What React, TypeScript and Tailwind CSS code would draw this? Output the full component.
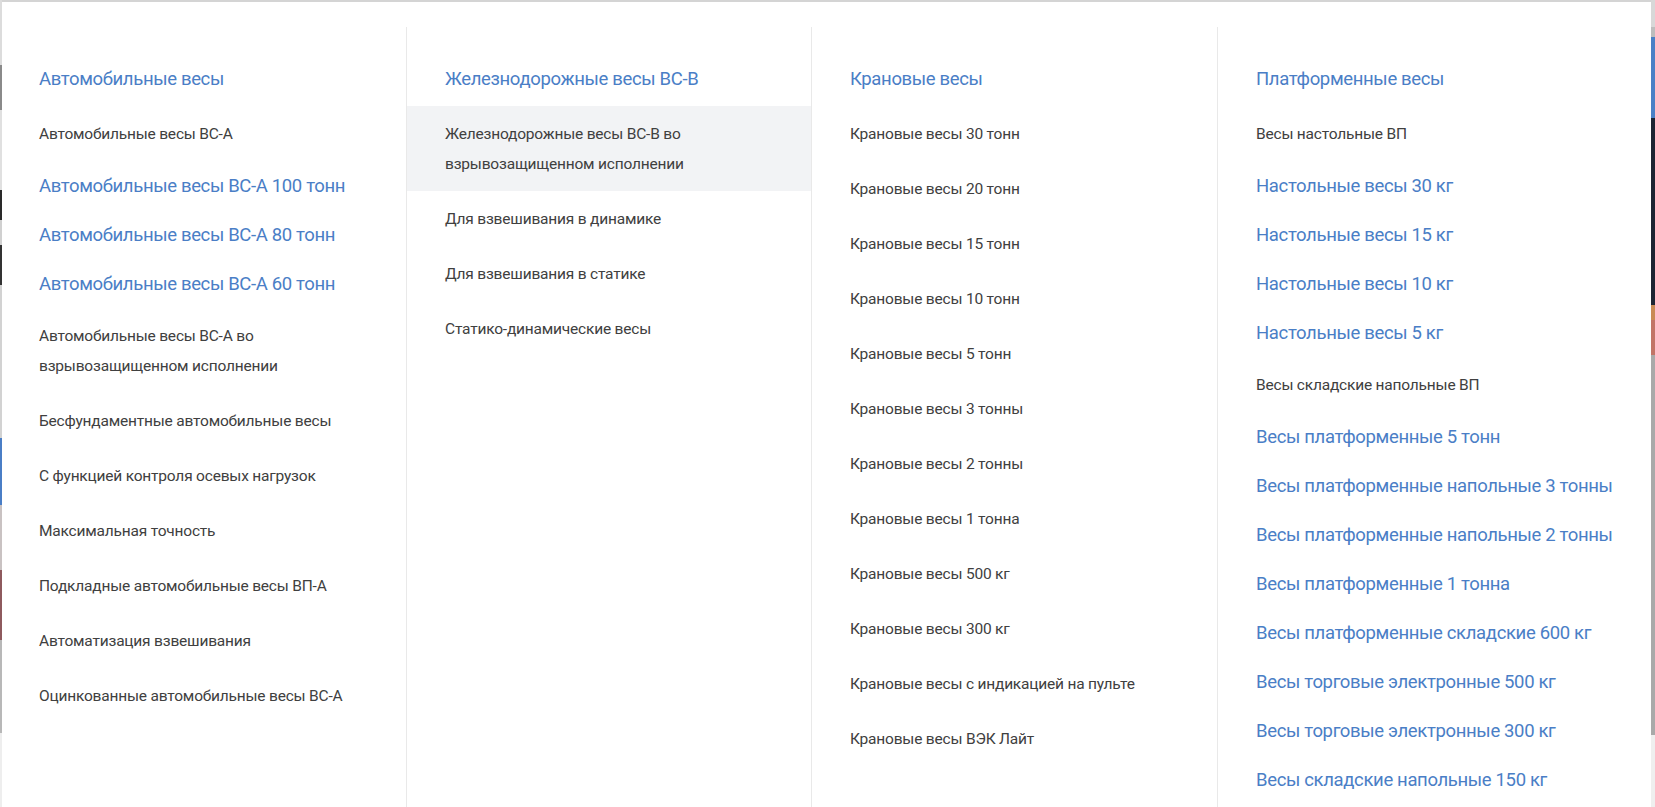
import React from "react";

type Item = { t: string; big?: boolean; active?: boolean };

const cols: { head: string; items: Item[] }[] = [
  {
    head: "Автомобильные весы",
    items: [
      { t: "Автомобильные весы ВС-А" },
      { t: "Автомобильные весы ВС-А 100 тонн", big: true },
      { t: "Автомобильные весы ВС-А 80 тонн", big: true },
      { t: "Автомобильные весы ВС-А 60 тонн", big: true },
      { t: "Автомобильные весы ВС-А во взрывозащищенном исполнении" },
      { t: "Бесфундаментные автомобильные весы" },
      { t: "С функцией контроля осевых нагрузок" },
      { t: "Максимальная точность" },
      { t: "Подкладные автомобильные весы ВП-А" },
      { t: "Автоматизация взвешивания" },
      { t: "Оцинкованные автомобильные весы ВС-А" },
    ],
  },
  {
    head: "Железнодорожные весы ВС-В",
    items: [
      { t: "Железнодорожные весы ВС-В во взрывозащищенном исполнении", active: true },
      { t: "Для взвешивания в динамике" },
      { t: "Для взвешивания в статике" },
      { t: "Статико-динамические весы" },
    ],
  },
  {
    head: "Крановые весы",
    items: [
      { t: "Крановые весы 30 тонн" },
      { t: "Крановые весы 20 тонн" },
      { t: "Крановые весы 15 тонн" },
      { t: "Крановые весы 10 тонн" },
      { t: "Крановые весы 5 тонн" },
      { t: "Крановые весы 3 тонны" },
      { t: "Крановые весы 2 тонны" },
      { t: "Крановые весы 1 тонна" },
      { t: "Крановые весы 500 кг" },
      { t: "Крановые весы 300 кг" },
      { t: "Крановые весы с индикацией на пульте" },
      { t: "Крановые весы ВЭК Лайт" },
    ],
  },
  {
    head: "Платформенные весы",
    items: [
      { t: "Весы настольные ВП" },
      { t: "Настольные весы 30 кг", big: true },
      { t: "Настольные весы 15 кг", big: true },
      { t: "Настольные весы 10 кг", big: true },
      { t: "Настольные весы 5 кг", big: true },
      { t: "Весы складские напольные ВП" },
      { t: "Весы платформенные 5 тонн", big: true },
      { t: "Весы платформенные напольные 3 тонны", big: true },
      { t: "Весы платформенные напольные 2 тонны", big: true },
      { t: "Весы платформенные 1 тонна", big: true },
      { t: "Весы платформенные складские 600 кг", big: true },
      { t: "Весы торговые электронные 500 кг", big: true },
      { t: "Весы торговые электронные 300 кг", big: true },
      { t: "Весы складские напольные 150 кг", big: true },
    ],
  },
];

const font = { fontFamily: '"Roboto", "Liberation Sans", "Noto Sans", sans-serif' };

function Column({ head, items, idx }: { head: string; items: Item[]; idx: number }) {
  const widthCls =
    idx === 0
      ? "w-[404px] shrink-0"
      : idx === 1
      ? "w-[405px] shrink-0 border-l border-[#e9e9e9]"
      : idx === 2
      ? "w-[406px] shrink-0 border-l border-[#e9e9e9]"
      : "flex-1 border-l border-[#e9e9e9]";
  const padCls = idx === 0 ? "pl-[37px] pr-[16px]" : "pl-[38px] pr-[16px]";
  return (
    <div className={`${widthCls} flex flex-col pt-[37px]`}>
      <div
        className={`${padCls} text-[18.5px] tracking-[-0.35px] leading-[30px] text-[#4a7ec6] mb-[12px] whitespace-nowrap`}
      >
        {head}
      </div>
      <ul className="flex flex-col">
        {items.map((it, i) =>
          it.big ? (
            <li
              key={i}
              className={`${padCls} py-[9.5px] text-[18.5px] tracking-[-0.35px] leading-[30px] text-[#4a7ec6] whitespace-nowrap`}
            >
              {it.t}
            </li>
          ) : (
            <li
              key={i}
              className={`${padCls} py-[12.5px] text-[15.5px] tracking-[-0.2px] leading-[30px] text-[#404040] ${
                it.active ? "bg-[#f2f3f5]" : ""
              }`}
            >
              {it.t.includes("во взрыво") ? (
                <>
                  {it.t.replace(" взрывозащищенном исполнении", "")}
                  <br />
                  взрывозащищенном исполнении
                </>
              ) : (
                it.t
              )}
            </li>
          )
        )}
      </ul>
    </div>
  );
}

export default function App() {
  return (
    <div className="w-[1655px] h-[807px] overflow-hidden flex bg-[#d6d6d6]" style={font}>
      <div className="w-[2px] shrink-0 flex flex-col">
        <div className="h-[65px] bg-[#dcdcdc]" />
        <div className="h-[45px] bg-[#8a8a8a]" />
        <div className="h-[80px] bg-[#e0e0e0]" />
        <div className="h-[30px] bg-[#2a2a2a]" />
        <div className="h-[25px] bg-[#d0d0d0]" />
        <div className="h-[40px] bg-[#333333]" />
        <div className="h-[153px] bg-[#d2d2d2]" />
        <div className="h-[67px] bg-[#4a7ec6]" />
        <div className="h-[65px] bg-[#c9c2c2]" />
        <div className="h-[70px] bg-[#8e5a5e]" />
        <div className="h-[93px] bg-[#b8b8b8]" />
        <div className="flex-1 bg-[#eeeeee]" />
      </div>
      <div className="flex-1 flex flex-col">
        <div className="h-[2px] bg-[#d4d4d4]" />
        <div className="flex-1 bg-white flex flex-col pt-[25px]">
          <div className="flex-1 flex">
            {cols.map((c, i) => (
              <Column key={i} idx={i} head={c.head} items={c.items} />
            ))}
          </div>
        </div>
      </div>
      <div className="w-[4px] shrink-0 flex flex-col">
        <div className="h-[27px] bg-[#d8d8d8]" />
        <div className="h-[10px] bg-[#bdbdbd]" />
        <div className="h-[81px] bg-[#4a80c6]" />
        <div className="h-[187px] bg-[#1c2433]" />
        <div className="h-[15px] bg-[#c98a55]" />
        <div className="h-[35px] bg-[#c27467]" />
        <div className="h-[380px] bg-[#a9a9a9]" />
        <div className="flex-1 bg-[#efefef]" />
      </div>
    </div>
  );
}
